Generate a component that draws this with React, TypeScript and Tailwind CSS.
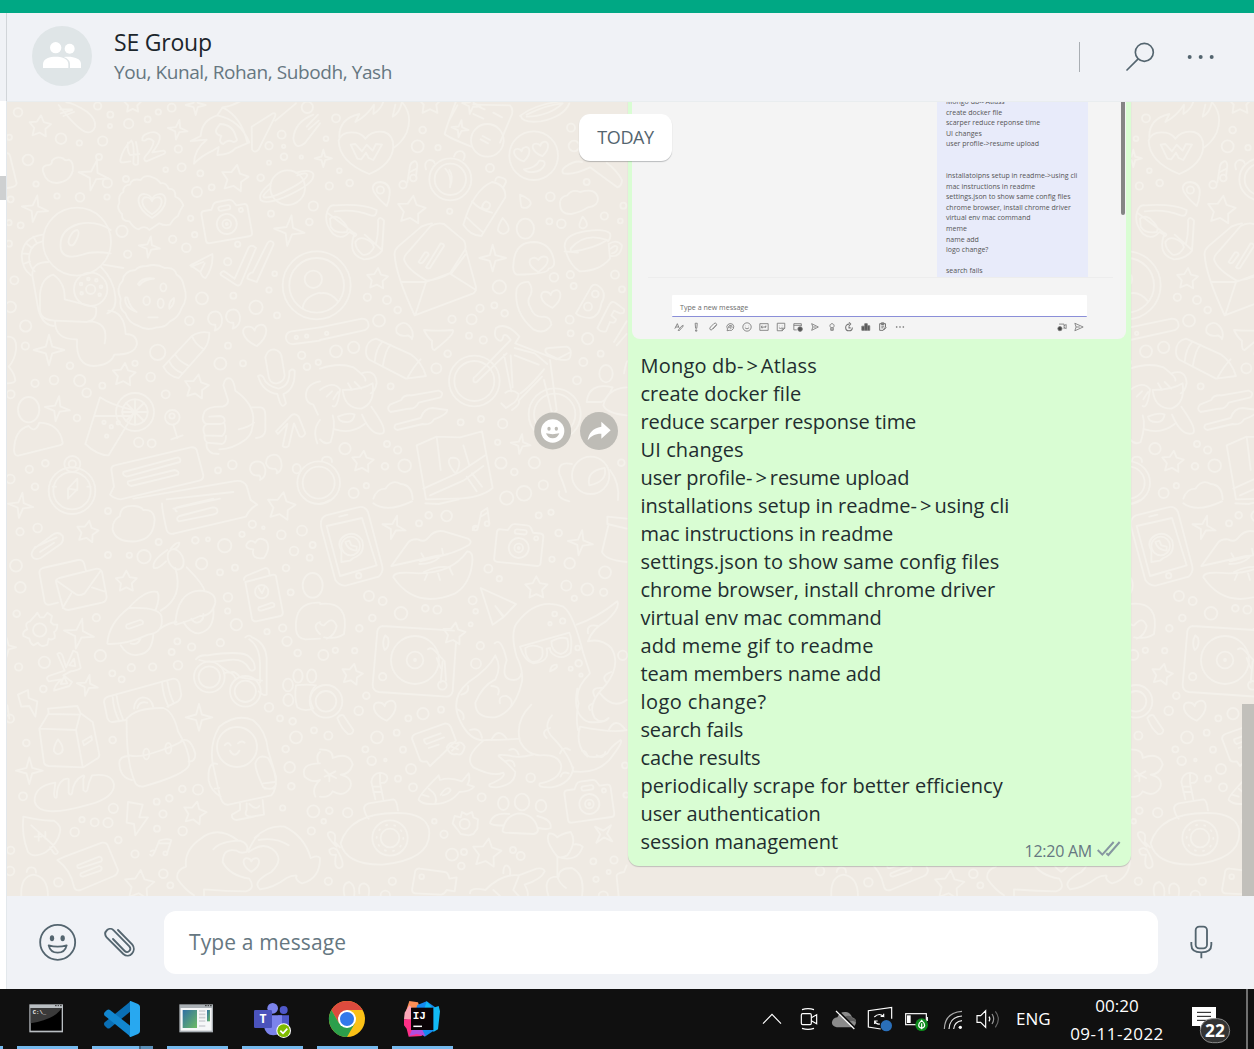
import React from "react";

const FONT = "font-['Open_Sans','Noto_Sans',sans-serif]";

/* ---------- wallpaper ---------- */

type Dot = [number, number, number];

function starPath(cx: number, cy: number, r: number, rot: number) {
  const pts: string[] = [];
  for (let i = 0; i < 10; i++) {
    const a = ((rot + i * 36 - 90) * Math.PI) / 180;
    const d = i % 2 ? r * 0.52 : r;
    pts.push(`${(cx + d * Math.cos(a)).toFixed(1)} ${(cy + d * Math.sin(a)).toFixed(1)}`);
  }
  return `M${pts.join("L")}Z`;
}

function sparkPath(cx: number, cy: number, r: number, rot: number) {
  let d = "";
  for (let i = 0; i <= 8; i++) {
    const a = ((rot + i * 45 - 90) * Math.PI) / 180;
    const q = i % 2 ? r * 0.3 : r;
    const x = (cx + q * Math.cos(a)).toFixed(1);
    const y = (cy + q * Math.sin(a)).toFixed(1);
    d += `${i ? "L" : "M"}${x} ${y}`;
  }
  return d + "Z";
}

function Marks({ dots, stars, sparks }: { dots: Dot[]; stars: number[][]; sparks: number[][] }) {
  return (
    <>
      {dots.map(([x, y, r], i) => (
        <circle key={i} cx={x} cy={y} r={r} />
      ))}
      {stars.map(([x, y, r, a], i) => (
        <path key={i} d={starPath(x, y, r, a)} />
      ))}
      {sparks.map(([x, y, r, a], i) => (
        <path key={i} d={sparkPath(x, y, r, a)} />
      ))}
    </>
  );
}

function Camera({ x, y, a }: { x: number; y: number; a: number }) {
  return (
    <g transform={`translate(${x} ${y}) rotate(${a})`}>
      <path d="M-60 -42h22l8-14q4-6 12-6h36q8 0 12 6l8 14h22q10 0 10 10v78q0 10-10 10h-120q-10 0-10-10v-78q0-10 10-10z" />
      <circle cy="8" r="30" />
      <circle cy="8" r="13" />
      <circle cy="8" r="3" />
      <rect x="-17" y="-47" width="36" height="13" rx="6" />
      <circle cx="49" cy="-26" r="6" />
    </g>
  );
}

function Heart({ x, y, s, a = 0 }: { x: number; y: number; s: number; a?: number }) {
  return (
    <path
      transform={`translate(${x} ${y}) rotate(${a})`}
      d={`M0 ${s * 0.9}C${-s * 1.3} ${s * 0.1} ${-s * 1.1} ${-s * 0.9} ${-s * 0.5} ${-s * 0.8}Q${-s * 0.1} ${-s * 0.75} 0 ${-s * 0.4}Q${s * 0.1} ${-s * 0.75} ${s * 0.5} ${-s * 0.8}C${s * 1.1} ${-s * 0.9} ${s * 1.3} ${s * 0.1} 0 ${s * 0.9}Z`}
    />
  );
}

function TopLeft() {
  return (
    <g transform="translate(0 100) scale(.33333)">
      <Marks
        dots={[
          [54, 37, 13], [183, 116, 16], [238, 129, 8], [308, 123, 14], [297, 171, 9], [84, 180, 16], [108, 252, 8], [171, 288, 8], [240, 292, 13], [322, 249, 14], [321, 291, 8], [378, 237, 9], [293, 18, 11], [331, 44, 9], [330, 78, 6], [386, 71, 14], [443, 58, 9], [475, 36, 8], [515, 23, 12], [535, 147, 11], [545, 202, 12], [497, 209, 7], [601, 220, 9], [635, 262, 9], [591, 276, 15], [572, 355, 8], [584, 404, 8], [518, 418, 11], [559, 443, 13], [383, 463, 11], [366, 394, 17], [713, 433, 8], [683, 485, 11], [700, 587, 9], [606, 595, 18], [568, 662, 13], [768, 622, 20], [824, 521, 7], [807, 570, 8], [831, 646, 9], [684, 737, 9], [661, 791, 18], [729, 790, 9], [473, 757, 23], [452, 831, 13], [405, 790, 8], [210, 797, 10], [239, 842, 17], [162, 840, 13], [105, 850, 11], [307, 857, 9], [260, 878, 13], [231, 954, 10], [77, 678, 17], [76, 738, 11], [43, 541, 12], [32, 621, 16], [62, 376, 9], [32, 298, 9], [27, 368, 8], [27, 431, 9], [28, 112, 8], [845, 104, 12], [807, 137, 11], [851, 139, 5], [852, 170, 10], [904, 171, 5], [807, 188, 6], [782, 233, 10], [813, 341, 9], [940, 318, 14], [928, 366, 10], [922, 22, 17], [497, 883, 12], [416, 1027, 14], [455, 1030, 12], [654, 1111, 9], [697, 1094, 13], [905, 766, 11], [921, 800, 10], [955, 787, 8], [136, 1090, 10], [88, 1108, 11], [105, 1160, 10], [31, 1137, 13], [32, 883, 12],
        ]}
        stars={[[120, 80, 34, 5], [704, 236, 42, 10], [372, 825, 36, 5], [589, 861, 38, 10], [398, 12, 28, 0]]}
        sparks={[[533, 89, 30, 10], [281, 226, 46, 12], [105, 326, 40, 10], [448, 441, 32, 8], [868, 392, 46, 8], [147, 750, 46, 0], [587, 15, 30, 0], [172, 926, 38, 8]]}
      />
      <path d="M176 15q46 62 78 80q22 8 31-14q4-24-24-46q-40-26-62-28M180 28l36 0M182 40l34-10M190 48l32-12" />
      <path d="M394 122q-24 20-33 57q-2 10 10 8l20-3M384 127q-4 24 6 38l28-3M394 122q10 10 6 68q6 8 14 2q2-30-6-66M427 121q-2-14 14-20q26-12 38 6q4 18-22 50l34-5q10 4 0 10l-52 22q-10-4-4-14q24-26 26-46q-14-14-26-2z" />
      <path d="M652 46Q605 60 602 108l-30 15l48-4q-38 30-38 72q22-24 58-40l16-10l-4 24q40-2 54-20l42-18Q720 60 652 46zM652 46l16-24Q724 50 742 128M654 80q-16 20 10 28q-10 20 6 24q14-16 30-6q16-2 8-14Q700 74 660 72zM668 22q30-4 60-22M755 80l64-40q10-2 6 10L776 148q-12 14-20 0zM826 62l62-52" />
      <path d="M132 222q-10-20 6-26q20 0 18-14q14-16 34-6q6 8 16 3q16 6 12 34q-8 32-48 36q-30 0-38-27z" />
      <path d="M458 232q14 4 24 18q16-4 24 16q22 0 20 24q16 6 24 26q-12 18-16 32q-14 8-24 26q-16 4-32-4q-14 10-30 20q-14-16-32-2q-14-2-28-24q-24 0-22-22q-18-16-8-34q-4-24 12-32q-2-20 20-22q4-20 32-14q12-18 36-8z" />
      <Heart x={456} y={316} s={42} />
      <Heart x={456} y={316} s={30} />
      <Camera x={679} y={364} a={-10} />
      <circle cx="863" cy="263" r="52" />
      <path d="M812 250Q772 282 782 300q14 14 70-8q96-42 88-70q-8-16-52-4M808 268q-24 20-16 24q24 4 78-26q50-26 52-42q-4-8-30 2" />
      <circle cx="231" cy="425" r="102" />
      <path d="M332 390Q290 360 236 372q-60 18-54 72q6 38 66 20q30-12 84-4M212 436q-12-6-2-26q10-20 22-20q10 6-6 36q-6 12-14 10zM128 404q-60 8-63 64q2 40 28 58M128 424q-34 6-40 40q-4 30 16 50M100 410l10 18M78 430l18 14M66 460l22 2M70 492l20-8" />
      <path d="M145 486q-50 0-48 40l16 92q10 56 48 60M160 524q-36 10-40 60v48q2 28 44 30l96 4q34-6 28-44l-94-24q2-50-34-74zM165 664q0 56 66 54q-4 80 50 80q50-2 62-34q64 0 68-34q-2-28-34-28q-4-68-52-70M302 500q40 40 44 90q4 40-24 50M264 664q64 0 50 66M310 494l60 10" />
      <circle cx="272" cy="568" r="50" />
      <circle cx="272" cy="568" r="14" />
      {[[243, 552], [265, 537], [289, 541], [303, 560], [299, 584], [245, 580]].map(([x, y], i) => (
        <circle key={i} cx={x} cy={y} r="4" />
      ))}
      <path d="M440 498q30-8 54 6q30-4 36 20q18 10 22 36q14 36-8 66q-8 26-34 38q-14 20-40 18q-30 12-54-4q-30-8-40-38q-20-14-14-44q-16-32 6-54q4-30 38-32q10-12 34-12zM414 552q14-22 48-16q-30 2-44 20zM376 592q-4 30 34 44q-20-12-28-44zM522 594q2 20-14 32q-4-20 14-32zM445 652h28" />
      <ellipse cx="440" cy="602" rx="10" ry="13" />
      <ellipse cx="490" cy="562" rx="9" ry="12" />
      <ellipse cx="482" cy="610" rx="9" ry="14" />
      <path d="M571 496l66-34q4 36-20 72q-10 0-16-18zM574 500l36-14M602 514l12-24" />
      <path d="M662 520q6-10 14-4l28 20l42-94q10-10 22 2l-46 108q-6 8-14 2l-44-28q-4-4-2-6zM758 518l44-88q8-12 18-2q2 6-2 12l-48 106l-28-10q0-12 12-18z" />
      <circle cx="950" cy="556" r="102" />
      <circle cx="950" cy="556" r="82" />
      <circle cx="940" cy="538" r="26" />
      <path d="M908 624q4-34 52-46" />
      <path d="M646 634q-22 2-22 24q4 18 22 16q2 10-2 18q24-8 22-36q-4-22-20-22zM700 628q-22 2-22 24q4 18 22 16q2 10-2 18q24-8 22-36q-4-22-20-22z" />
      <Heart x={766} y={706} s={36} a={-8} />
      <path d="M490 800l86-92q24-16 52-10q0 30-16 50L536 834q-30-4-46-34zM576 708q8 24 36 40M508 784q10 24 40 36M526 764q10 20 38 32" />
      <path d="M960 682l-86 12q-18 4-16 22q4 18 24 16l78-10" />
      <circle cx="889" cy="712" r="5" />
      <circle cx="920" cy="708" r="5" />
      <path d="M796 772q6-24 26-24q22 4 24 28l8 50q-2 20-24 24q-20 2-24-20zM774 828q10-6 16 4q8 26 46 34q34-8 32-52q8-10 16-2q2 56-34 70l8 28q-10 16-18-2l-8-26q-44-6-58-54z" />
      <ellipse cx="86" cy="929" rx="32" ry="38" />
      <path d="M118 968q60 2 70 60q0 6-10 8L58 1066q-14 4-16-14q2-64 44-74q20 24 32-10z" />
      <path d="M300 892q36 24 92 36q12 10 4 22l-70 116q-34 0-70-34zM286 948h108" />
      <circle cx="405" cy="936" r="57" />
      <circle cx="405" cy="936" r="38" />
      <path d="M405 898v76M367 936h76M378 909l54 54M432 909l-54 54" />
      <circle cx="312" cy="967" r="5" />
      <circle cx="334" cy="980" r="5" />
      <circle cx="355" cy="968" r="5" />
      <circle cx="320" cy="1008" r="5" />
      <circle cx="517" cy="952" r="22" />
      <circle cx="516" cy="948" r="8" />
      <path d="M520 974l12 40M514 1018l34-12" />
      <path d="M614 934q14-16 54-14q18-6 16-20l-14-44q4-26 22-20q10 6 14 36q50 34 54 80q0 50-22 66q-40 30-80 30M614 934q-14 30 6 38q-16 10-6 32q-2 18 6 22q-4 24 18 34l18 2M620 972h40q16-2 14-12q-2-12-16-12l-30 2M614 1006l52 2q14-10 8-36M620 1028l46 4q12-4 12-24M752 922h30q14 2 14 24v46q-2 20-28 22M716 988q30-6 46-20" />
      <path d="M828 994l46-48q12-8 22 4l20 50q-8 16-18 8l-16-38l-16 68q-10 8-18 0l14-66l-28 30z" />
      <path d="M334 1108q0-10 10-12l228-54q14-2 18 8l20 76q0 14-12 16l-236 56q-20-2-32-14l12-24zM370 1116l164-44q10 4 6 14l-160 44q-14-4-10-14zM384 1144l140-34q16 4 10 14l-140 34q-14-4-10-14z" />
      <path d="M400 1196l300-52q30-6 40 14l12 42M500 1198l200-22" />
      <circle cx="217" cy="1092" r="24" />
      <circle cx="217" cy="1092" r="11" />
      <circle cx="216" cy="1172" r="70" />
      <circle cx="216" cy="1172" r="56" />
      <path d="M232 1136l-28 30v30l28-28zM204 1166l28 4M158 1160h10M262 1160h10" />
      <path d="M772 1084q-22 2-22 24q4 22 28 18q6 8 2 14q18-8 16-32q-4-24-24-24zM822 1064q-24 2-24 26q6 20 28 16q8 6 4 14q18-8 14-32q-4-24-22-24z" />
      <ellipse cx="890" cy="1106" rx="12" ry="14" />
      <path d="M20 160q8-2 10 8l20 82q0 12-28 14M24 710q28 0 24 40q-4 30-22 50q18 20 20 42q-4 8-24 8M960 844q-44 8-42 46q2 20 22 24q10 22 14 30M960 960q-24 30-8 70" />
      <path d="M880 116q4-50 60-72M880 116q6 36 34 14l46-60M920 80l34-36M926 88l30-26" />
    </g>
  );
}

function TopRight() {
  return (
    <g transform="translate(320 100) scale(.33333)">
      <Marks
        dots={[
          [48, 55, 12], [18, 116, 7], [58, 212, 7], [28, 258, 11], [89, 249, 10], [308, 90, 10], [293, 139, 18], [354, 143, 8], [510, 204, 12], [389, 334, 8], [753, 83, 12], [762, 138, 16], [691, 290, 13], [688, 364, 9], [724, 371, 13], [800, 246, 9], [853, 348, 11], [910, 317, 9], [901, 363, 7], [885, 524, 12], [906, 568, 9], [751, 524, 11], [702, 532, 13], [761, 558, 9], [538, 561, 20], [523, 616, 9], [480, 625, 11], [554, 640, 10], [455, 658, 15], [396, 658, 11], [447, 707, 9], [490, 720, 11], [383, 761, 10], [349, 805, 15], [142, 592, 11], [201, 600, 12], [233, 630, 10], [177, 662, 18], [101, 742, 17], [48, 754, 18], [212, 859, 9], [422, 967, 9], [483, 957, 9], [548, 971, 14], [533, 1027, 8], [543, 1089, 17], [583, 1116, 10], [643, 1088, 17], [749, 659, 12], [752, 700, 9], [803, 716, 17], [842, 761, 9], [790, 786, 12], [771, 841, 12], [75, 1046, 17], [201, 1032, 9], [233, 1050, 11], [254, 1097, 19], [195, 1099, 10], [139, 1157, 8], [101, 1179, 15], [670, 1155, 14], [904, 1088, 10], [612, 1180, 22], [560, 1194, 20], [20, 700, 5],
        ]}
        stars={[[274, 331, 44, 8], [172, 537, 33, 4], [128, 1086, 34, 6], [330, 8, 38, 0]]}
        sparks={[[518, 474, 40, 0], [10, 175, 26, 0], [602, 1032, 30, 8], [454, 14, 28, 10], [420, 86, 26, 10]]}
      />
      <path d="M58 112q-2-56 60-70l-12 24q36-20 56-52l-2 28q24-14 32-42M226 14l-8 36q20-10 28-44q34 40 14 92q-14 30-40 46" />
      <path d="M148 222q-90-36-92-100q8-30 52-24q18 4 28 18q20-26 56-20q28 8 28 44q-4 54-72 82zM92 134l14-2l20 22l14-20l18 18l10-20l18 2l-26 46l-14-6l-8-16l-14 20l-12-2z" />
      <path d="M262 248l8-50q2-10 12-14q8-2 10 12l-4 34M270 216l20-10" />
      <circle cx="249" cy="254" r="11" />
      <circle cx="280" cy="234" r="10" />
      <path d="M200 318q-40-34-42-54q2-18 24-18q30 4 27 36q-2 22-9 36z" />
      <circle cx="181" cy="270" r="11" />
      <path d="M22 334q6-20 22-18q84-6 126 14q0 22-18 16q-48-20-108-12M22 334q-12 36 18 68q26 20 48-6l14 8q-20 60 30 74q36-2 54-26l6-90q-12-16-18-2q2 40-6 70M24 340l74 56q20 8 4 14M186 450l-52-46M30 356q20-16 40 10q18 18 10 30q-34 6-48-16zM106 426q10-16 28-10q24 8 28 26q-14 26-34 22q-22-16-22-38z" />
      <path d="M408 4q-30 80-34 98q10 10 80 38M460 14l110 2q10 10 6 26l-36 86M388 60l24-44M480 22l14 6M520 38l26 14M460 42l30 14" />
      <circle cx="502" cy="121" r="49" />
      <path d="M488 108l22 12M482 118l22 12M600 48q50-40 148-46M602 48q6 22 60 16q70-14 86-54M620 44q60-30 108-34q-40 38-108 40" />
      <circle cx="641" cy="167" r="73" />
      <Heart x={607} y={163} s={24} a={-12} />
      <Heart x={663} y={147} s={24} a={-12} />
      <path d="M612 208q36-4 46-26q18-2 16 12q-8 20-34 22q-20 2-28-8z" />
      <circle cx="391" cy="238" r="63" />
      <circle cx="391" cy="238" r="47" />
      <path d="M376 206q20 20 14 56M388 210q14 20 2 50M318 208q-8-22 10-28q14 0 16 10M402 170q6-20 24-16q14 10 4 26" />
      <path d="M430 374q30-104 86-128q42 8 40 46l-72 116q-34-2-54-34zM456 304q20 24 60 34M440 352q26 26 50 46M526 242q2-14 16-10q18 4 16 14l-8 16M498 304q20 6 8 22q-14 6-20-4q2-12 12-18z" />
      <path d="M600 284q2 36 6 38q18 6 26-10q4-12-32-28zM548 354q-16 26-14 38q14 18 30 2q8-14-16-40zM788 350q-14 26-8 32q12 8 20-4q4-10-12-28z" />
      <path d="M720 306q2-16 22-20q14-20 38-10q50-14 54 20q0 22-30 26q-20 14-50 20q-36 2-34-36z" />
      <path d="M730 220q-8-10 6-20q30-20 50-14M730 220q30 6 80-18l82 60q14-4 14-22q-16-30-46-52" />
      <path d="M224 466q-2-14 10-26l70-60q16-8 32-10M332 378q20-12 40-6l60 50q6 10 4 26l-46 72q-34 20-70 22q-60-34-68-64q2-14 14-24zM224 466q4 60 60 180l176-66q8-4 8-18l-30-110M242 546h76l70-26l80 50M318 546l-32 98M394 520l42-56M296 486l18-28q10-4 12 6l-18 24q-8 4-12-2zM318 502l44-72q10 0 10 8l-42 66q-8 4-12-2z" />
      <ellipse cx="616" cy="386" rx="26" ry="30" />
      <path d="M580 496q2-70 62-70q50 2 60 56q4 20-16 24q0 16-96 18q-12-6-10-28zM655 516q-34-20-24-38q14-10 24 2q10-16 26-8q10 20-26 44z" />
      <path d="M734 440q-2-36 60-46q60-10 76 6q4 14-6 24M734 440q10 50 44 74q60 0 92-38l-4-44M734 454l40 4M752 446q40-50 110-26q-40 26-110 36zM866 432q24-16 40 4q-4 36-34 32M872 446q14-14 20-4q0 16-16 18" />
      <path d="M590 566q10-22 36-20q14 20 6 38q-14 20 0 40q10 30 40 26q20 2 22 24q-20 32-54 14q-60-50-50-122z" />
      <Heart x={694} y={597} s={30} a={-8} />
      <path d="M768 640l46-80q10-12 24 0q24 20 6 50q-6 40-34 44q-30-2-42-14zM832 684l36-70q8-14 20-4l24 18q4 14-12 12l-18-8l-8 14l14 12q-2 14-18 8l-12 28q-16 4-26-10zM882 726l38-62M890 736l30-34" />
      <circle cx="826" cy="582" r="10" />
      <circle cx="804" cy="620" r="12" />
      <path d="M0 580q30-6 54 24M0 682l126-26q20 0 20 22q-4 12-18 14L0 720" />
      <path d="M244 670q-20 8-14 28q12 14 34 8q12 6 12 12q8-24-10-42q-10-10-22-6zM312 690q40 4 86 0q10 10-54 60q-10 2-8-28q-14-10-24-32z" />
      <path d="M138 756q0-34 30-40l106 48q30 20 44 64l-60 8L150 780q-12-8-12-24zM188 724q-20 20-24 62M212 734q-16 16-24 66M302 778q-20 20-40 56" />
      <circle cx="463" cy="843" r="76" />
      <circle cx="463" cy="843" r="60" />
      <circle cx="704" cy="943" r="78" />
      <circle cx="704" cy="943" r="62" />
      <path d="M466 830l106-110q-14-22-22-12q-2 16-12 14q-20-10-10-38q30-20 70 26l-12 20l124 48l42-22M560 760l-90 86q-14 4-8-14M584 744l60 16l38 32M552 764l22 110M572 766l6 96M672 808q-40 50-70 72M656 794l-72-28M666 830l-70 72q6 10-20 28M690 780l20 150q-10 16-16 2l-22-92M676 752q0-8 10-8l54-4q18 6 10 32q-6 12-34 6l-30-14q-10-6-10-12M556 878q20-14 40 4q-2 20-20 30l-18 12l-14-14" />
      <path d="M0 806q56-20 100-4q40 30 36 40M124 820q44-14 46 30q-6 26-18 30M0 870q40-30 60-2q-8 60-22 50M68 870q60 0 90-20q8 60-34 76q-50 0-56-56zM20 890l16-16M40 898l14-22M84 850l12 20M104 846l20 20M54 950q34-14 50-6q-4 24-26 22q-20 0-24-16zM154 920q50 70 34 80q-34 10-62-56M38 946q10 30-6 80q-16 10-32-8M44 988q50 16 90-16" />
      <path d="M210 914l34-14q6-16 30-14l82-14q18 6 6 20l-66 16q-10 20-30 18l-54 10q-14-8-2-22zM226 974l76-20q10-30 36-30l44 6q0 14-40 28q-10 18-34 14l-76 18q-14-4-6-16z" />
      <path d="M290 1036l60-26l70 2l66-18l32 170q-34 30-110 32l-90 2zM350 1010l12 100M430 1036l18 60M310 1166l110-50l76-50M330 1186l100-44l60-44M440 1130l30 44M456 1120l30 40M406 1120q-30-36-14-46q24-4 26 14q0 18-12 32z" />
      <ellipse cx="858" cy="821" rx="20" ry="26" />
      <path d="M800 906q6-60 78-44q-20 40-34 44zM850 916q10-50 70-54M920 946q-60-6-70-30M912 820q6-34 10-36" />
      <circle cx="812" cy="1126" r="56" />
      <path d="M808 1156q-10-44 46-52q10 40-46 52zM756 1092q-44-10-38 30q10 20 20 54M870 1110q30 40 24 90M718 1174q-10 20 30 30" />
      <circle cx="-4" cy="1148" r="64" />
      <circle cx="-4" cy="1148" r="48" />
      <path d="M6 1082q0-12 16-12q14 2 14 16M160 1196q10-30 36-30q20-30 46-14q34 2 36 46" />
    </g>
  );
}

function BottomLeft() {
  return (
    <g transform="translate(0 500) scale(.33333)">
      <Marks
        dots={[
          [60, 95, 11], [113, 84, 13], [324, 33, 9], [476, 126, 9], [324, 165, 9], [388, 166, 8], [432, 170, 20], [605, 191, 17], [586, 121, 10], [624, 118, 6], [674, 137, 20], [660, 217, 9], [705, 203, 9], [726, 103, 8], [757, 73, 11], [790, 83, 4], [844, 104, 13], [906, 92, 15], [882, 153, 13], [938, 135, 9], [929, 173, 9], [858, 204, 10], [872, 277, 9], [48, 197, 18], [61, 262, 16], [50, 341, 10], [289, 353, 11], [301, 467, 17], [133, 487, 17], [56, 501, 11], [130, 567, 10], [337, 520, 9], [365, 538, 9], [394, 503, 11], [458, 501, 11], [534, 496, 13], [515, 456, 9], [532, 424, 9], [575, 441, 11], [661, 428, 11], [684, 292, 13], [683, 333, 8], [709, 374, 17], [801, 395, 8], [848, 384, 11], [861, 424, 14], [893, 459, 10], [807, 622, 13], [840, 655, 9], [878, 664, 10], [888, 712, 18], [942, 691, 9], [857, 747, 10], [869, 802, 16], [874, 859, 10], [848, 924, 8], [940, 934, 18], [934, 993, 11], [338, 720, 10], [79, 729, 10], [69, 889, 12], [340, 925, 14], [246, 959, 8], [284, 967, 12], [324, 968, 14], [224, 996, 13], [355, 1020, 10], [405, 1062, 11], [470, 905, 9], [508, 895, 10], [489, 942, 11], [471, 986, 9], [548, 993, 13], [547, 867, 10], [594, 869, 15], [490, 1121, 13], [511, 1156, 9], [175, 1147, 13], [32, 1051, 11], [30, 1113, 13], [30, 656, 12],
        ]}
        stars={[[262, 96, 34, 10], [379, 245, 33, 0], [584, 940, 36, 12], [843, 20, 44, 10], [418, 1156, 46, 5]]}
        sparks={[[62, 16, 38, 8], [237, 401, 46, 12], [262, 556, 32, 12], [597, 652, 40, 0], [88, 812, 40, 0], [20, 442, 28, 0]]}
      />
      <path d="M102 146l56-42q18-12 30 4q4 14-6 24l-60 42q-20 8-26-6q-4-8 6-22zM104 142l66-30M120 156l42-28" />
      <path d="M338 90q-2-28 22-42q2-34 44-30q20 2 26 12q30-4 34 28q-2 60-56 66q-60 4-70-34z" />
      <path d="M486 10q0 20 14 80q6 16 24 10l214-50q10-24 34-36l-20-14M520 26l140-30M530 34q-8-4 0-12l110-26M536 64q-10-8 2-16l100-26q16 0 14 14q-2 6-14 8z" />
      <path d="M760 148q-26-2-20-16q10-16 26-4q10-20 32-6q16 20-6 52q-40 6-32-26z" />
      <path d="M118 218q0-10 10-14l106-24q14-2 18 10l6 22M118 218l16 88q4 10 16 8l24-6M168 246q-2-8 10-12l112-28q12 0 16 10l14 74q0 14-14 18l-100 22q-14 0-18-10zM170 242l60 42q10 4 24-4l48-68M188 324l26-44M318 276l-42-14" />
      <path d="M106 346l6-8l8 14h12l10-14l14 10l-4 18l8 8l12 0q0 18-10 22q4 14 2 18q-10 8-18 2l-4 18q-20 10-28-6l-14 8q-10-6-12-20l-18-8q-4-14 12-20q-10-20 8-24z" />
      <circle cx="119" cy="390" r="20" />
      <path d="M172 462q10-8 16 6l10 34l22-50l12 6l10 46q-10 8-30 10l-22 12l26 20l-8 12l-46 14q0-14 22-34l-38 6q-10-10 0-16l48-16zM208 496l14-20l4 22zM182 552l10-22l10 20z" />
      <path d="M54 584l30-14l2 24l26 10l-6 46l-18-32l-24 2zM22 616l6 40" />
      <path d="M322 430q4-60 64-106q50-56 86-48q10 16-6 56M386 324q90-4 98 24q10 50-40 56q-64 30-120 28M482 332q70-40 44-128M560 202q50 50 54 72M526 372q6-96 72-100q50 2 48 36q-10 40-46 40q-30 14-72 26q-8-2-2-12M480 386q30-20 50-20M380 374l40-14q12 2 8 12l-40 14q-14 0-8-12zM362 436q22 36 54 28q40-4 44-60M392 430q20 8 30-14M550 366q20 34 46 34q50-10 44-78M574 356q8 12 18 12q20-4 18-26" />
      <ellipse cx="527" cy="178" rx="22" ry="32" transform="rotate(-25 527 178)" />
      <path d="M502 150q-50 34-40 54q12 4 36-20M512 146q16-20 26-18q0 12-16 20" />
      <path d="M732 240q-2-6 6-12l58-24q12 0 12 18M736 246l84-22q8 0 8 6l20 104q2 12-6 14l-74 16q-10 0-12-8zM776 322l40-14q10 2 6 12l-38 12q-12 0-8-10z" />
      <circle cx="785" cy="275" r="20" />
      <path d="M776 264l10 16l8-18" />
      <ellipse cx="938" cy="256" rx="30" ry="37" />
      <path d="M960 308q-78-4-72 80q2 26 28 30l44-2M960 366q-26 10 0 36" />
      <circle cx="628" cy="531" r="46" />
      <circle cx="628" cy="531" r="32" />
      <circle cx="736" cy="574" r="46" />
      <circle cx="736" cy="574" r="32" />
      <path d="M588 478q10-14 34-12q90-14 120 0q26 20 22 42q-10 10-18-4q-16-30-60-24q-60 10-88 0M672 520q22-10 34 14M736 412q12-10 20 0q40 14 44 62v110q-10 4-24-10M748 418q30 20 32 70v60M660 498l30 20q14-8 30 14l66 10" />
      <path d="M312 606q0-12 12-16l196-54q14 0 18 16l6 32q-2 14-10 20l-32 16M312 606l10 48q6 14 16 12l40-6M338 590q2 40 20 74M350 588q4 34 20 72M486 548q4 44 20 72M502 544q6 40 20 66M402 626q2-30 26-34q26 0 32 30M412 624q6-22 30-16" />
      <path d="M380 656q30-34 110-32q30 10 44 70q36 60 34 100q-10 30-140 66q-20 0-24-16q-26-60-24-188zM388 766q30 8 80-10q60-20 80-34M544 722q28-12 42 40q0 24-20 22M388 768q-30 0-30 22q2 44 38 50" />
      <ellipse cx="439" cy="762" rx="9" ry="16" />
      <ellipse cx="505" cy="745" rx="9" ry="16" />
      <path d="M118 686l28-46l-2-14l88-8l10 22l36 26l20 98q0 10-10 14l-38 24l-104-4q-12-2-14-10zM118 686l110 4l12-46l-92-2M228 690l20 110M248 724l26-16l2 12l-24 16z" />
      <path d="M174 718q-14 22-12 36q10 16 24 2q8-14-12-38z" />
      <path d="M104 904q-2-46 62-56l-4 34q2 16 8 10q0-40 22-54q14-4 14 0v40q4 10 10 2q4-40 34-54q6 0 0 10v34q8 10 12 0q4-24 14-44q60-8 66 28q0 40-76 60q-150 44-162-10z" />
      <path d="M638 790q-10-60 20-110q50-40 100-20q40 30 46 90l24 80q2 40-14 56l-128 28q-20 4-28-34zM652 792q-30-10-26 50q6 30 36 48M766 790q10-30 38-16q24 40 24 80q-10 20-38 8q-24-50-24-72zM790 850l34-4M794 866l26 0M720 910v20l-24 14q-2 14 14 16l52-10M740 910v20q-10 20 14 20l38-6l-4-44M748 912q20 20 30 6M644 866l14-2" />
      <circle cx="711" cy="741" r="60" />
      <path d="M674 736q10-14 18 0M714 730q10-10 20-2M690 752q14 24 28 0" />
      <path d="M384 906l44 8l-10 38h26l-38 54l-4-34l-22-4zM452 1054q10-6 12 0q-6 20-14 10M464 1056l14-34q20-8 36-2l-12 38M474 1030h34" />
      <circle cx="496" cy="1060" r="6" />
      <path d="M70 950q60 14 92 12q24 16 18 34q-6 34-42 60q-38 20-54 0q-20-50-14-106zM94 976l62 56l18 24q-4 10-12 4l-12-18M116 998v24M124 1010h-20M136 1016v-20" />
      <path d="M172 1080l22-10l112-42q14-2 18 10l30 72q-2 14-12 18l-100 42q-16 4-20-10q-10-50-50-80zM232 1096l66-26q12 4 6 14l-62 20q-12 2-10-8zM242 1120l56-22q12 4 4 14l-54 18q-10-2-6-10z" />
      <path d="M80 1116q2-14 14-14q14 0 14 16M64 1190q-4-60 36-66q44 6 44 66" />
      <path d="M712 1020q-60-44-110-4q-50 34-44 84q-30 10-26 36q20 30 50 50M640 1048q20-24 80-26q30 10 20 34q-20 6-30-4q-40-10-42 34q20 40 80 50q20 30-10 38q-60 0-126-6v20M764 1014q40-40 90-34q60 30 78 94q20-10 28 0M776 1020q50-10 90 16M746 1050q20-40 30-44M746 1056q40-30 70-10q40 30-2 70q-60 30-34 52q40-4 80-34q20-10 30-6M960 1076q0 60-54 74q-20-8-18-24" />
      <Heart x={754} y={1094} s={24} />
      <path d="M888 556q34-4 60 0q-30 30-8 70q-30 10-48-4q-10-30-4-66z" />
      <ellipse cx="894" cy="528" rx="14" ry="20" />
      <ellipse cx="935" cy="528" rx="14" ry="20" />
      <ellipse cx="864" cy="555" rx="15" ry="19" />
      <ellipse cx="865" cy="600" rx="15" ry="18" />
      <path d="M960 790q-60 0-46 40q20 20 46 10M960 840q-26 24-14 50M960 756q-12 8-6 30" />
    </g>
  );
}

function BottomRight() {
  return (
    <g transform="translate(320 500) scale(.33333)">
      <Marks
        dots={[
          [326, 46, 10], [297, 70, 9], [380, 48, 16], [147, 288, 15], [188, 303, 12], [157, 354, 10], [118, 385, 10], [243, 340, 19], [316, 325, 10], [352, 329, 12], [505, 206, 12], [538, 236, 8], [458, 301, 12], [467, 334, 7], [452, 373, 6], [481, 437, 11], [468, 491, 15], [656, 46, 9], [693, 37, 8], [716, 99, 10], [696, 178, 8], [749, 190, 16], [739, 257, 15], [763, 295, 8], [802, 268, 18], [851, 277, 11], [855, 217, 18], [908, 466, 14], [104, 452, 8], [46, 451, 8], [10, 465, 15], [139, 587, 10], [116, 632, 13], [309, 641, 17], [265, 655, 9], [363, 629, 9], [230, 698, 9], [171, 712, 18], [25, 707, 12], [136, 748, 9], [249, 749, 9], [155, 782, 13], [196, 780, 4], [273, 807, 15], [234, 836, 9], [279, 862, 12], [485, 892, 12], [632, 833, 13], [28, 932, 10], [83, 938, 14], [11, 964, 7], [343, 964, 7], [372, 1003, 11], [396, 1064, 18], [432, 1056, 9], [424, 1098, 10], [579, 1050, 9], [602, 1068, 12], [820, 1084, 9], [882, 1080, 11], [828, 1138, 8], [866, 1116, 6], [25, 1144, 11], [217, 1144, 11], [196, 1186, 14], [850, 1188, 14], [704, 342, 7], [728, 363, 8], [690, 371, 5], [773, 444, 7], [776, 490, 10], [752, 506, 6], [783, 525, 5], [915, 796, 9], [918, 885, 8],
        ]}
        stars={[[649, 264, 35, 0], [402, 402, 35, 8], [96, 524, 33, 12], [500, 1060, 45, 8]]}
        sparks={[[222, 82, 36, 15], [781, 128, 38, 8], [851, 1002, 34, 40]]}
      />
      <path d="M4 84q-6-30 14-38l96-24q20-6 30 14l42 160q6 20-10 34l-96 26q-20 4-34-16L4 84M20 78l106-24l44 142l-110 32zM58 50l24-6" />
      <circle cx="116" cy="227" r="8" />
      <path d="M64 186l0-34q-16-30 12-46q30-14 50 14q12 40-26 54l-10 8z" />
      <circle cx="92" cy="138" r="28" />
      <path d="M76 126q6 24 34 26l0-12l-16-4l-6-14z" />
      <path d="M160 10q40 30 116-6M316 10l40 2l60-14M0 12q16-4 30-12" />
      <path d="M214 198l50-70q10-12 30-10q20 10 30-4q20-26 48-20l72 22q14 8 4 18q-50 30-100 34q-70 16-134 30zM220 232q0-20 76-12q100 0 146-66q20 0 14 40q-8 60-50 86q-120 50-186-48zM300 184l84-22M298 192q40 0 60-20M304 160l8 14M366 146l4 20M312 216q40-20 78-14M314 240l8-18M360 240l-6-20M398 224l-10-22" />
      <path d="M458 90q10-16 16-8M474 82l10-46l18-12l6 46M482 50l20-12" />
      <circle cx="466" cy="84" r="7" />
      <circle cx="501" cy="71" r="7" />
      <Camera x={597} y={136} a={6} />
      <Camera x={807} y={904} a={-8} />
      <path d="M482 264l106 48l-36 38l-26-32l24 34l-32 22zM862 50l58 6M862 50v22l58 14M866 72l-20 84q10 24 74 30" />
      <path d="M188 378l214 14M188 378q-14 2-16 16l-14 160q0 18 18 22l204 14q14 0 18-16l10-146M362 548l6-64" />
      <circle cx="285" cy="480" r="72" />
      <circle cx="285" cy="480" r="25" />
      <circle cx="285" cy="480" r="3" />
      <circle cx="188" cy="530" r="11" />
      <circle cx="367" cy="556" r="13" />
      <path d="M324 448q10-8 20 4l30 32l4 58M350 474l12 30M196 406q-12 20-2 44q16-10 10-36z" />
      <path d="M0 312q90-10 72 90q-20 16-60 10M0 370q10 10 14 4q24-28 36 4q-6 30-30 38" />
      <circle cx="18" cy="604" r="49" />
      <circle cx="18" cy="604" r="31" />
      <path d="M52 654q8-12 18-8l30 44q0 14-16 12q-20-16-32-48z" />
      <Heart x={196} y={632} s={34} a={-8} />
      <path d="M276 716q0-10 10-14l90-32q10 0 16 10l16 42q-30 30-40 40l-38 36l-10-14q-20 4-22-10zM312 718l50-18M320 732l52-20M326 744l30-10M312 718q0 10 8 14M380 742q10-20 30-12q16-8 24 10q-6 30-24 22q-20 6-30-20zM390 738l24 10M396 752l20-18" />
      <path d="M590 470q-20-70 0-100q60-80 140-50q30 20 60 140l20 60q-50 50-34 90q-10 40-2 80M590 470q20 40 16 74q-20 90-80 108q-60 4-60-44q20-50 60-70q20-36 0-72q-20 40-80 80q-60 50-24 120q30 60 76 54q50 0 100-4M524 430q20-20 36 50q-20 60 20 60q20 0 24-20M634 614q-50 50-34 110q20 40 60 42q60-4 64 34q-4 40-64 50q-10 14 34 12q60-10 66-60M490 722q-60 50-30 80q60 30 90 16q10 14-40 34q-10 10 20 10q56-8 56-46q-16-20-48-46q-10-8 26-4q30 10 76-2M696 646q-26 30-4 60q60 60 68 108q80 10 120-50q30-40 22-44q-30 20-40 40q-40 20-66 4q-30-34-16-84M770 374q60-20 122-70q10 20-34 60q-40 20-54 60q40-10 70 20q30 50-16 110q-60 60-34 100q20 20 42 0q-10 16-60 12q-50-20-34-100M840 580q40 50 80 20M780 680q100 20 140 10" />
      <path d="M600 440l148-42q10 20 4 60q-20 20-44 10q-20-10-18-24l-10 2q10 40-40 44q-26-6-40-50zM616 444q20-14 50 0q10 40-30 42q-20-10-20-42zM694 424q30-16 48-8q10 40-20 46q-28-6-28-38zM690 514q2-20 20-20q6 10-20 20z" />
      <path d="M424 584q24-6 20-26M412 628q24 10 18 30M450 690q30-10 36 24M514 720q20-40 46-4M514 558q30 0 20 26M540 610q-6-24 20-22q20 10 14 28M690 684q-30 10-10 30M720 760q10-24 30-10M568 750q20-10 28 14M556 784q24-10 28 14M804 400q-6-30 30-22M860 548q-20-20 14-32M824 590q-16-30 26-26M810 630q-10-14 10-20M866 690q20-40 48-4M786 752q14 0 16 18M830 766q20 14 26-10M722 830q4-18 24-10" />
      <path d="M0 748q40 0 38 26q50-20 60 20q-10 30-36 30q40 10 28 40q-20 30-52 10q-10 20-38 16M14 810l14 14l18-10M28 824v20M28 824l-14 6M28 824l20 10" />
      <path d="M296 900q-4-10 60-74l4 14q30-10 66 4l20-24q6 20-4 34l20 6q-10 14-44 16q-30 40-90 36q-20 0-32-12zM326 866q30 20 20 44M362 884q20-30 30-14q-4 12-24 16M306 884l20 6" />
      <path d="M154 846q4-26 26-28q24 4 22 18q-4 16-22 12l10 50M154 846l12 52M158 860h22M160 876h24M180 820v26M132 926q0-12 14-16l74-12q10 0 14 34M132 926q4 20 14 30M62 1030q30-100 196-90q70 10 70 60q0 80-140 94q-110 2-126-64zM50 1040q-40-40-20-44q20-2 14 30q10 10 16 16M50 1048q30 50 10 56q-20 4-12-40q-20 4-20-14q10-10 20-2" />
      <circle cx="210" cy="1014" r="53" />
      <circle cx="210" cy="1014" r="28" />
      <circle cx="210" cy="1014" r="40" strokeDasharray="3 22" />
      <path d="M426 936l14 8l16-8l4 16l14 6l-2 28l-12 16l-14 4l-24-4l-10-14l-14-18l6-22l18 4z" />
      <circle cx="434" cy="972" r="15" />
      <ellipse cx="606" cy="906" rx="22" ry="25" />
      <ellipse cx="550" cy="910" rx="16" ry="20" />
      <ellipse cx="663" cy="918" rx="16" ry="18" />
      <path d="M548 990q10-50 56-50q44 8 50 52q-4 10-14 10l-84-4q-10-2-8-8zM568 942q-50-6-58 28q10 8 42 6M652 948q44 10 40 36q-10 6-36 0" />
      <path d="M712 1070q-40-50-24-70q14 0 24 12q10-10 40-16q20 30-10 70q-20 10-30 4M712 1070q60 20 76-30q-10-10-30-6M712 1070v60q6 20 26 34M686 1190q-20-60 26-60M716 1130q0-26 40-26q40 20 30 84" />
      <path d="M276 1170l10-58q4-8 14-6l74 10q10 0 14 20l22-4l-6 42l-24-4q-6 12-16 14l-78-4q-8 0-10-10M74 1190q-10-40 14-44q20 10 14 44M118 1180q-4-30 14-30q20 4 14 36M450 1180q0-20 46-10q50-50 100-44l54-20q20-4 24 8q-10 24-60 40q16 30 6 40M550 1120q0-24 10-24q14 6 10 28M520 1170l20 18M596 1130l-16 40l18 20" />
      <circle cx="305" cy="1130" r="7" />
      <path d="M920 1096l-8 20q-24 4-22 14l6 60" />
    </g>
  );
}

function Wallpaper() {
  const tile = (
    <>
      <TopLeft />
      <TopRight />
      <BottomLeft />
      <BottomRight />
    </>
  );
  return (
    <svg className="absolute inset-0 h-full w-full" viewBox="7 101 1247 795" fill="none" stroke="#f4f1eb" strokeWidth="5.500" strokeLinejoin="round" strokeLinecap="round">
      <defs>
        <clipPath id="tile">
          <rect x="0" y="101" width="630" height="795" />
        </clipPath>
      </defs>
      <g clipPath="url(#tile)">{tile}</g>
      <g transform="translate(810 0)" clipPath="url(#tile)">
        {tile}
      </g>
    </svg>
  );
}

/* ---------- header ---------- */

function Header() {
  return (
    <header className="flex h-[88px] shrink-0 items-center bg-[#f0f2f6] pl-[25px]">
      <svg className="mb-[2px] h-[60px] w-[60px] shrink-0" viewBox="96 78 180 180">
        <circle cx="186" cy="168" r="90" fill="#dfe5e7" />
        <g fill="#fff">
          <circle cx="167" cy="143" r="17" />
          <circle cx="209" cy="146" r="15" />
          <path d="M129 204v-12c0-17 22-22 38-22s38 5 38 22v12z" />
          <path d="M191 171c5-1 10-1 15-1 16 0 37 6 37 21v13h-33v-12c0-9-6-16-19-21z" />
        </g>
      </svg>
      <div className="mb-px ml-[22px] flex flex-col">
        <span className="text-[23px] leading-[31px] tracking-[-0.2px] text-[#1c262c]">SE Group</span>
        <span className="text-[19px] leading-[29px] tracking-[-0.41px] text-[#667781]">You, Kunal, Rohan, Subodh, Yash</span>
      </div>
      <div className="ml-auto mr-[38px] flex items-center">
        <div className="mr-[46px] h-[30px] w-px bg-[#a9aeb3]" />
        <svg className="mr-[30px] h-[30px] w-[30px]" viewBox="258 126 90 90" fill="none" stroke="#54656f" strokeWidth="5" strokeLinecap="round">
          <circle cx="313" cy="157" r="27" />
          <path d="M293 178l-32 32" />
        </svg>
        <svg className="h-[30px] w-[30px]" viewBox="436 126 90 90" fill="#54656f">
          <circle cx="447" cy="171" r="6" />
          <circle cx="480" cy="171" r="6" />
          <circle cx="513" cy="171" r="6" />
        </svg>
      </div>
    </header>
  );
}

/* ---------- shared picture inside the message ---------- */

const noteLines = [
  "Mongo db->Atlass",
  "create docker file",
  "scarper reduce reponse time",
  "UI changes",
  "user profile->resume upload",
  "",
  "",
  "installatoipns setup in readme->using cli",
  "mac instructions in readme",
  "settings.json to show same config files",
  "chrome browser, install chrome driver",
  "virtual env mac command",
  "meme",
  "name add",
  "logo change?",
  "",
  "search fails",
];

const toolIcons: React.ReactNode[] = [
  <path d="M2 16L8 4l4 10M4 12h7M10 20q8-12 12-12q1 3-10 13z" />,
  <path d="M10 3h5l-1 12h-3zM11 19h3v3h-3z" />,
  <path d="M20 7l-9 10q-4 4-6 1t1-6l8-8q4-3 6 0t-1 5l-8 8" />,
  <path d="M5 21l1-4q-4-7 1-11t11-1q5 5 2 11t-10 4zM9 15q-2-6 3-7t5 5q-2 4-5 1t2-3" />,
  <path d="M12 2a10 10 0 1 0 .1 0M8 9v1M16 9v1M7 14q5 5 10 0" />,
  <path d="M2 4h20v16H2zM9 10H6v4h3v-2M12 10v4M15 14v-4h3M15 12h2" />,
  <path d="M3 3h18v12l-6 6H3zM8 9v1M15 9v1M7 14q4 3 8 0M15 21v-6h6" />,
  <>
    <path d="M20 10V4H2v15h7M2 8h18" />
    <circle cx="17" cy="17" r="5.500" fill="#555" />
  </>,
  <path d="M4 4l16 8-16 8 3-8zM8 12h6" />,
  <path d="M12 4a5 5 0 1 0 .1 0M9 13v7h6v-7M9 17h6" />,
  <path d="M12 5a8 8 0 1 0 8 8M12 1l4 4-4 4M12 10v4h4" strokeWidth="2.600" />,
  <path d="M2 10h6v10H2zM9 4h6v16H9zM16 9h5v11h-5z" fill="#555" />,
  <path d="M4 4h14v8l-6 8H4zM8 2h6v4H8zM13 20l7-7M8 10h7M8 14h5" strokeWidth="2.400" />,
  <g fill="#666" stroke="none">
    <circle cx="4" cy="12" r="2" />
    <circle cx="12" cy="12" r="2" />
    <circle cx="20" cy="12" r="2" />
  </g>,
];

function Screenshot() {
  return (
    <div className="relative h-[258px] w-[494px] overflow-hidden rounded-b-[8px] bg-[#f4f4f4]">
      <div className="absolute bottom-[62px] left-[305px] w-[151px] bg-[#e8ebfa] pl-[9px] text-[7px] leading-[10.6px] text-[#555]">
        {noteLines.map((l, i) => (
          <div key={i} className="h-[10.6px] whitespace-nowrap">
            {l}
          </div>
        ))}
      </div>
      <div className="absolute right-px top-0 h-[134px] w-[4px] rounded-b bg-[#858585]" />
      <div className="absolute bottom-[61px] left-[16px] h-px w-[465px] bg-[#ededed]" />
      <div className="absolute bottom-[22px] left-[40px] flex h-[22px] w-[415px] items-center rounded-[1px] border-b border-[#8b8fd8] bg-white pl-[8px] pt-[3px] text-[7.1px] text-[#6b6b6b]">
        Type a new message
      </div>
      <div className="absolute bottom-[7px] left-[42px] flex gap-[7px]">
        {toolIcons.map((n, i) => (
          <svg key={i} className="h-[10px] w-[10px]" viewBox="0 0 24 24" fill="none" stroke="#777" strokeWidth="2">
            {n}
          </svg>
        ))}
      </div>
      <div className="absolute bottom-[7px] right-[42px] flex gap-[7px]">
        <svg className="h-[10px] w-[10px]" viewBox="0 0 24 24" fill="none" stroke="#777" strokeWidth="2">
          <path d="M5 5h12v12M17 9l5-3v10l-5-3" />
          <circle cx="7" cy="16" r="5" fill="#444" />
        </svg>
        <svg className="h-[10px] w-[10px]" viewBox="0 0 24 24" fill="none" stroke="#777" strokeWidth="2">
          <path d="M2 3l20 9L2 21l3-9zM5 12h9" />
        </svg>
      </div>
    </div>
  );
}

/* ---------- conversation ---------- */

const lines: [string, string][] = [
  ["Mongo db->Atlass", "tracking-[0.2px]"],
  ["create docker file", ""],
  ["reduce scarper response time", "tracking-[-0.1px]"],
  ["UI changes", "tracking-[0.1px]"],
  ["user profile->resume upload", "tracking-[-0.12px]"],
  ["installations setup in readme->using cli", ""],
  ["mac instructions in readme", "tracking-[-0.08px]"],
  ["settings.json to show same config files", "tracking-[0.08px]"],
  ["chrome browser, install chrome driver", "tracking-[-0.05px]"],
  ["virtual env mac command", ""],
  ["add meme gif to readme", "tracking-[0.13px]"],
  ["team members name add", "tracking-[-0.05px]"],
  ["logo change?", "tracking-[0.4px]"],
  ["search fails", "tracking-[-0.16px]"],
  ["cache results", "tracking-[-0.15px]"],
  ["periodically scrape for better efficiency", "tracking-[0.03px]"],
  ["user authentication", "tracking-[-0.1px]"],
  ["session management", "tracking-[-0.06px]"],
];

function MessageLine({ text, className }: { text: string; className: string }) {
  const [before, after] = text.split("->");
  return (
    <div className={`whitespace-nowrap ${className}`}>
      {before}
      {after !== undefined && <span className="tracking-[3px]">-&gt;</span>}
      {after}
    </div>
  );
}

function Chat() {
  return (
    <main className="relative h-[795px] shrink-0 overflow-hidden bg-[#efeae3]">
      <Wallpaper />
      <div className="relative flex items-start justify-end pr-[123px]">
        <div className="mr-[10px] mt-[311px] flex gap-[9px]">
          <svg className="h-[38px] w-[37px]" viewBox="641 937 111 114">
            <circle cx="697" cy="994" r="55.5" fill="#bebcb6" />
            <circle cx="697" cy="994" r="35" fill="#fff" />
            <ellipse cx="686" cy="987" rx="5" ry="6" fill="#bebcb6" />
            <ellipse cx="708" cy="987" rx="5" ry="6" fill="#bebcb6" />
            <path d="M677 1001q20 5 40 0q-5 15-20 15t-20-15z" fill="#bebcb6" />
          </svg>
          <svg className="h-[38px] w-[38px]" viewBox="780 937 114 114">
            <circle cx="837" cy="994" r="57" fill="#bebcb6" />
            <path d="M844 966l28 26-28 25v-15c-20 0-31 7-41 20 3-21 15-37 41-41z" fill="#fff" />
          </svg>
        </div>
        <div className="h-[765px] w-[503px] rounded-b-[11px] bg-[#d9fdd3] pl-[4px] shadow-[0_1px_1px_rgba(11,20,26,0.2)]">
          <div className="h-[238px] overflow-hidden">
            <div className="-mt-[20px]">
              <Screenshot />
            </div>
          </div>
          <div className="pl-[8.5px] pt-[13px] text-[20px] leading-[28px] text-[#222d2f]">
            {lines.map(([text, tracking]) => (
              <MessageLine key={text} text={text} className={tracking} />
            ))}
          </div>
          <div className="-mt-[5px] flex h-0 items-center justify-end gap-[5px] pr-[10px] text-[16px] tracking-[-0.25px] text-[#667781]">
            <span>12:20 AM</span>
            <svg className="mb-[5px] h-[17px] w-[24px]" viewBox="350 450 72 51" fill="none" stroke="#8696a0" strokeWidth="6">
              <path d="M352 480l14 14 34-38M378 490l6 5 34-39" />
            </svg>
          </div>
        </div>
      </div>
      <div className="absolute inset-x-0 top-0 h-px bg-[#e9edef]" />
      <div className="absolute left-[572px] top-[13px] flex h-[47px] w-[93px] items-center justify-center rounded-[11px] bg-white text-[18px] tracking-[-0.4px] text-[#54656f] shadow-[0_1px_1px_rgba(11,20,26,0.25)]">
        TODAY
      </div>
      <div className="absolute bottom-0 right-0 h-[192px] w-[12px] bg-[#c2c0bb]" />
    </main>
  );
}

/* ---------- composer ---------- */

function Composer() {
  return (
    <footer className="flex h-[93px] shrink-0 items-center bg-[#f0f2f6] pl-[32px]">
      <svg className="h-[39px] w-[38px]" viewBox="117 99 114 117" fill="none" stroke="#54656f" strokeWidth="5.5">
        <circle cx="173" cy="157" r="52.5" />
        <ellipse cx="156" cy="145" rx="6.5" ry="9" fill="#54656f" stroke="none" />
        <ellipse cx="188" cy="145" rx="6.5" ry="9" fill="#54656f" stroke="none" />
        <path d="M146 166q27 8 54 0q-5 22-27 22t-27-22z" strokeLinejoin="round" />
      </svg>
      <svg className="ml-[27px] h-[30px] w-[32px]" viewBox="310 114 96 90" fill="none" stroke="#54656f" strokeWidth="5.5" strokeLinecap="round">
        <path d="M352 120l43 44c14 18-8 44-27 28l-50-50c-13-16 8-34 21-21l47 48c9 12-6 22-14 14l-35-36" />
      </svg>
      <div className="ml-[28px] flex h-[63px] w-[994px] items-center rounded-[12px] bg-white pl-[25px] text-[21px] tracking-[0.13px] text-[#667781]">
        Type a message
      </div>
      <svg className="mb-[2px] ml-[32px] h-[36px] w-[23px]" viewBox="1349 103 69 108" fill="none" stroke="#54656f" strokeWidth="5.500">
        <rect x="1366" y="111" width="34" height="65" rx="11" />
        <path d="M1353 157v8c0 14 10 23 30 23s30-9 30-23v-8M1383 188v18" />
      </svg>
    </footer>
  );
}

/* ---------- taskbar ---------- */

const apps: React.ReactNode[] = [
  <svg key="cmd" className="h-[60px] w-[39px]" viewBox="84 297 117 180">
    <rect x="88" y="343" width="101" height="84" fill="#b9bec2" />
    <path d="M92 354h93v68H92z" fill="#000" />
    <path d="M92 354h93q-20 34-93 46z" fill="#3a3a3a" />
    <path d="M165 347h5M173 347h4M180 347h5" stroke="#333" strokeWidth="3" />
    <text x="98" y="373" fontSize="17" fontWeight="bold" fill="#eee" fontFamily="Liberation Mono, monospace">C:\_</text>
  </svg>,
  <svg key="code" className="h-[60px] w-[39px]" viewBox="309 297 117 180">
    <path d="M314 397l78-63v30l-62 50q-5 3-9 0l-7-7q-4-5 0-10z" fill="#0a6fb5" />
    <path d="M314 377q-4-5 0-10l7-7q5-3 9 0l74 58-12 22z" fill="#1287d0" />
    <path d="M392 333l22 9q6 3 6 8v74q0 5-6 8l-22 9q-6 0-2-8v-93q-2-8 2-7z" fill="#28a8f0" />
  </svg>,
  <svg key="panel" className="h-[60px] w-[39px]" viewBox="534 297 117 180">
    <defs>
      <linearGradient id="pg" x1="0" y1="0" x2="1" y2="1">
        <stop offset="0" stopColor="#2f6fa5" />
        <stop offset="1" stopColor="#6dbb62" />
      </linearGradient>
    </defs>
    <rect x="538" y="343" width="101" height="84" fill="#aab0b5" />
    <path d="M542 354h93v68h-93z" fill="#f6f7f8" />
    <path d="M548 360h43v54h-43z" fill="url(#pg)" />
    <path d="M597 363h19M597 373h19M597 383h19M597 393h19M597 408h19" stroke="#cdd0d3" strokeWidth="5" />
    <path d="M621 360h9v34h-9z" fill="url(#pg)" />
    <path d="M615 347h5M623 347h4M630 347h5" stroke="#333" strokeWidth="3" />
  </svg>,
  <svg key="teams" className="h-[60px] w-[39px]" viewBox="759 297 117 180">
    <circle cx="851" cy="360" r="12" fill="#5059c9" />
    <path d="M834 376h33v34q-2 20-20 20h-13z" fill="#5059c9" />
    <circle cx="818" cy="355" r="16" fill="#7b83eb" />
    <path d="M792 376h54v34q-2 24-26 26-24-2-28-26z" fill="#7b83eb" />
    <rect x="762" y="360" width="54" height="54" rx="4" fill="#4b53bc" />
    <text x="789" y="400" fontSize="36" fontWeight="bold" fill="#fff" textAnchor="middle" fontFamily="Open Sans, sans-serif">T</text>
    <circle cx="851" cy="422" r="22" fill="#fff" />
    <circle cx="851" cy="422" r="19" fill="#7fba00" />
    <path d="M841 422l8 8 13-14" stroke="#fff" strokeWidth="5" fill="none" />
  </svg>,
  <svg key="chrome" className="h-[60px] w-[39px]" viewBox="984 297 117 180">
    <circle cx="1041" cy="387" r="54" fill="#fbc116" />
    <path d="M994.2 360a54 54 0 0 1 93.600 0h-46.800l-23.400 40.500z" fill="#dd4b3e" />
    <path d="M994.200 360a54 54 0 0 0 46.800 81l23.400-40.500h-46.800z" fill="#2c9f4b" />
    <circle cx="1041" cy="387" r="27" fill="#fff" />
    <circle cx="1041" cy="387" r="21" fill="#3279ea" />
  </svg>,
  <svg key="ij" className="h-[60px] w-[39px]" viewBox="1209 297 117 180">
    <path d="M1228 333l26 4 10 30-10 40-40-24 4-20z" fill="#fb8f57" />
    <path d="M1214 368l14-22 12 10 0 36-28-4z" fill="#fba6b8" />
    <path d="M1212 388l40 0 14 50-40 2-6-24-8-10z" fill="#fe2f86" />
    <path d="M1252 345l28-11 32 22 4 24-8 38-34 22-40-40z" fill="#148af0" />
    <path d="M1280 334l18 20 18-6 4 16-6 54-14 8v-66h-28z" fill="#12b8f4" />
    <path d="M1240 410l20-6 16 34-26-6-22 6z" fill="#b04ee0" />
    <rect x="1233" y="353" width="67" height="67" fill="#0b0306" />
    <text x="1238" y="388" fontSize="33" fontWeight="bold" fill="#fff" fontFamily="Liberation Mono, monospace">IJ</text>
    <path d="M1240 409h26" stroke="#fff" strokeWidth="4.500" />
  </svg>,
];

function Tray({ x, children }: { x: number; children: React.ReactNode }) {
  return (
    <svg className="h-[60px] w-[36px] shrink-0" viewBox={`${x} 297 108 180`} fill="none" stroke="#fff" strokeWidth="3.500">
      {children}
    </svg>
  );
}

function Taskbar() {
  return (
    <div className="relative flex h-[60px] w-full shrink-0 bg-[#101010] text-white">
      <div className="flex w-[10px] items-end">
        <div className="h-[3px] w-[3px] bg-[#76b9ed]" />
      </div>
      {apps.map((a, i) => (
        <div key={i} className="relative flex w-[75px] justify-center">
          {a}
          <div className="absolute bottom-0 left-[7px] flex h-[3px] w-[61px] bg-[#76b9ed]">
            {i === 1 && <div className="ml-auto w-[14px] border-l-2 border-[#3f6583] bg-[#5b8fb8]" />}
          </div>
        </div>
      ))}
      <div className="ml-[294px] flex">
        <Tray x={42}>
          <path d="M69 401l27-28 27 28" />
        </Tray>
        <Tray x={150}>
          <rect x="184" y="371" width="30" height="33" rx="4" />
          <path d="M214 383l16-9v27l-16-9M186 359q18-6 36 0M186 415q18 6 36 0" />
        </Tray>
        <Tray x={258}>
          <path d="M290 412q-16-4-14-16t16-14q8-18 26-16 14 2 18 16 14 4 12 16t-16 14z" fill="#8b8b8b" stroke="none" />
          <path d="M320 378q14-2 16 6 14 2 12 14-6-8-16-4-16 0-20-12z" fill="#5d5d5d" stroke="none" />
          <path d="M292 360l54 54" stroke="#101010" strokeWidth="5" />
          <path d="M288 363l55 54" />
        </Tray>
        <Tray x={366}>
          <path d="M422 417l-37-6v-49l70-10v34" />
          <path d="M403 381q14-14 28-2v-8M431 379h-9M404 402v-9h9M404 394q4 10 16 8" />
          <circle cx="439" cy="407" r="17" fill="#2a6fba" stroke="none" />
        </Tray>
        <Tray x={474}>
          <rect x="497" y="371" width="62" height="33" />
          <path d="M501 376h11v23h-11z" fill="#fff" stroke="none" />
          <path d="M562 381v12" />
          <circle cx="545" cy="404" r="19" fill="#0c8a1c" stroke="none" />
          <path d="M545 391q-9 8-9 15t9 9q9-2 9-9t-9-15zM545 400v18" />
        </Tray>
        <Tray x={582}>
          <path d="M627 417q2-36 39-39M641 417q2-22 25-25" stroke="#eee" />
          <path d="M613 417q2-50 53-53" stroke="#aaa" />
          <circle cx="661" cy="412" r="5" fill="#fff" stroke="none" />
        </Tray>
        <Tray x={690}>
          <path d="M711 377h11l15-15v50l-15-15h-11z" />
          <path d="M747 380q5 7 0 14" />
          <path d="M756 372q10 15 0 30" stroke="#999" />
          <path d="M766 364q18 23 0 48" stroke="#666" />
        </Tray>
      </div>
      <div className="ml-[10px] flex items-center text-[17px] tracking-[0px]">ENG</div>
      <div className="absolute left-[1057px] flex h-full w-[120px] flex-col items-center justify-center pt-px text-[17px] leading-[28px]">
        <span>00:20</span>
        <span className="tracking-[0.5px]">09-11-2022</span>
      </div>
      <svg className="absolute left-[1188px] h-[60px] w-[48px]" viewBox="1344 297 144 180">
        <path d="M1356 351h72v57h-36l-12 10v-10h-24z" fill="#fff" />
        <path d="M1371 367h42M1371 379h42M1371 391h30" stroke="#101010" strokeWidth="3" />
        <rect x="1381" y="386" width="88" height="72" rx="36" fill="#333" stroke="#8a8a8a" strokeWidth="3" />
        <text x="1425" y="440" fontSize="52" fontWeight="700" fill="#fff" textAnchor="middle" fontFamily="Open Sans, sans-serif">22</text>
      </svg>
      <div className="absolute right-[6px] top-0 h-full w-[2px] bg-[#707070]" />
    </div>
  );
}

export default function App() {
  return (
    <div className={`${FONT} flex h-[1049px] w-[1254px] flex-col overflow-hidden bg-white`}>
      <div className="h-[13px] shrink-0 bg-[#00a884]" />
      <div className="flex h-[976px] shrink-0">
        <div className="flex w-[7px] shrink-0 flex-col border-r border-[#e3e8ec]">
          <div className="-mr-px h-[88px] border-r border-[#d1d5d9] bg-[#f0f2f6]" />
          <div className="mt-[75px] h-[24px] bg-[#ced0d1]" />
        </div>
        <div className="flex w-[1247px] flex-col">
          <Header />
          <Chat />
          <Composer />
        </div>
      </div>
      <Taskbar />
    </div>
  );
}
